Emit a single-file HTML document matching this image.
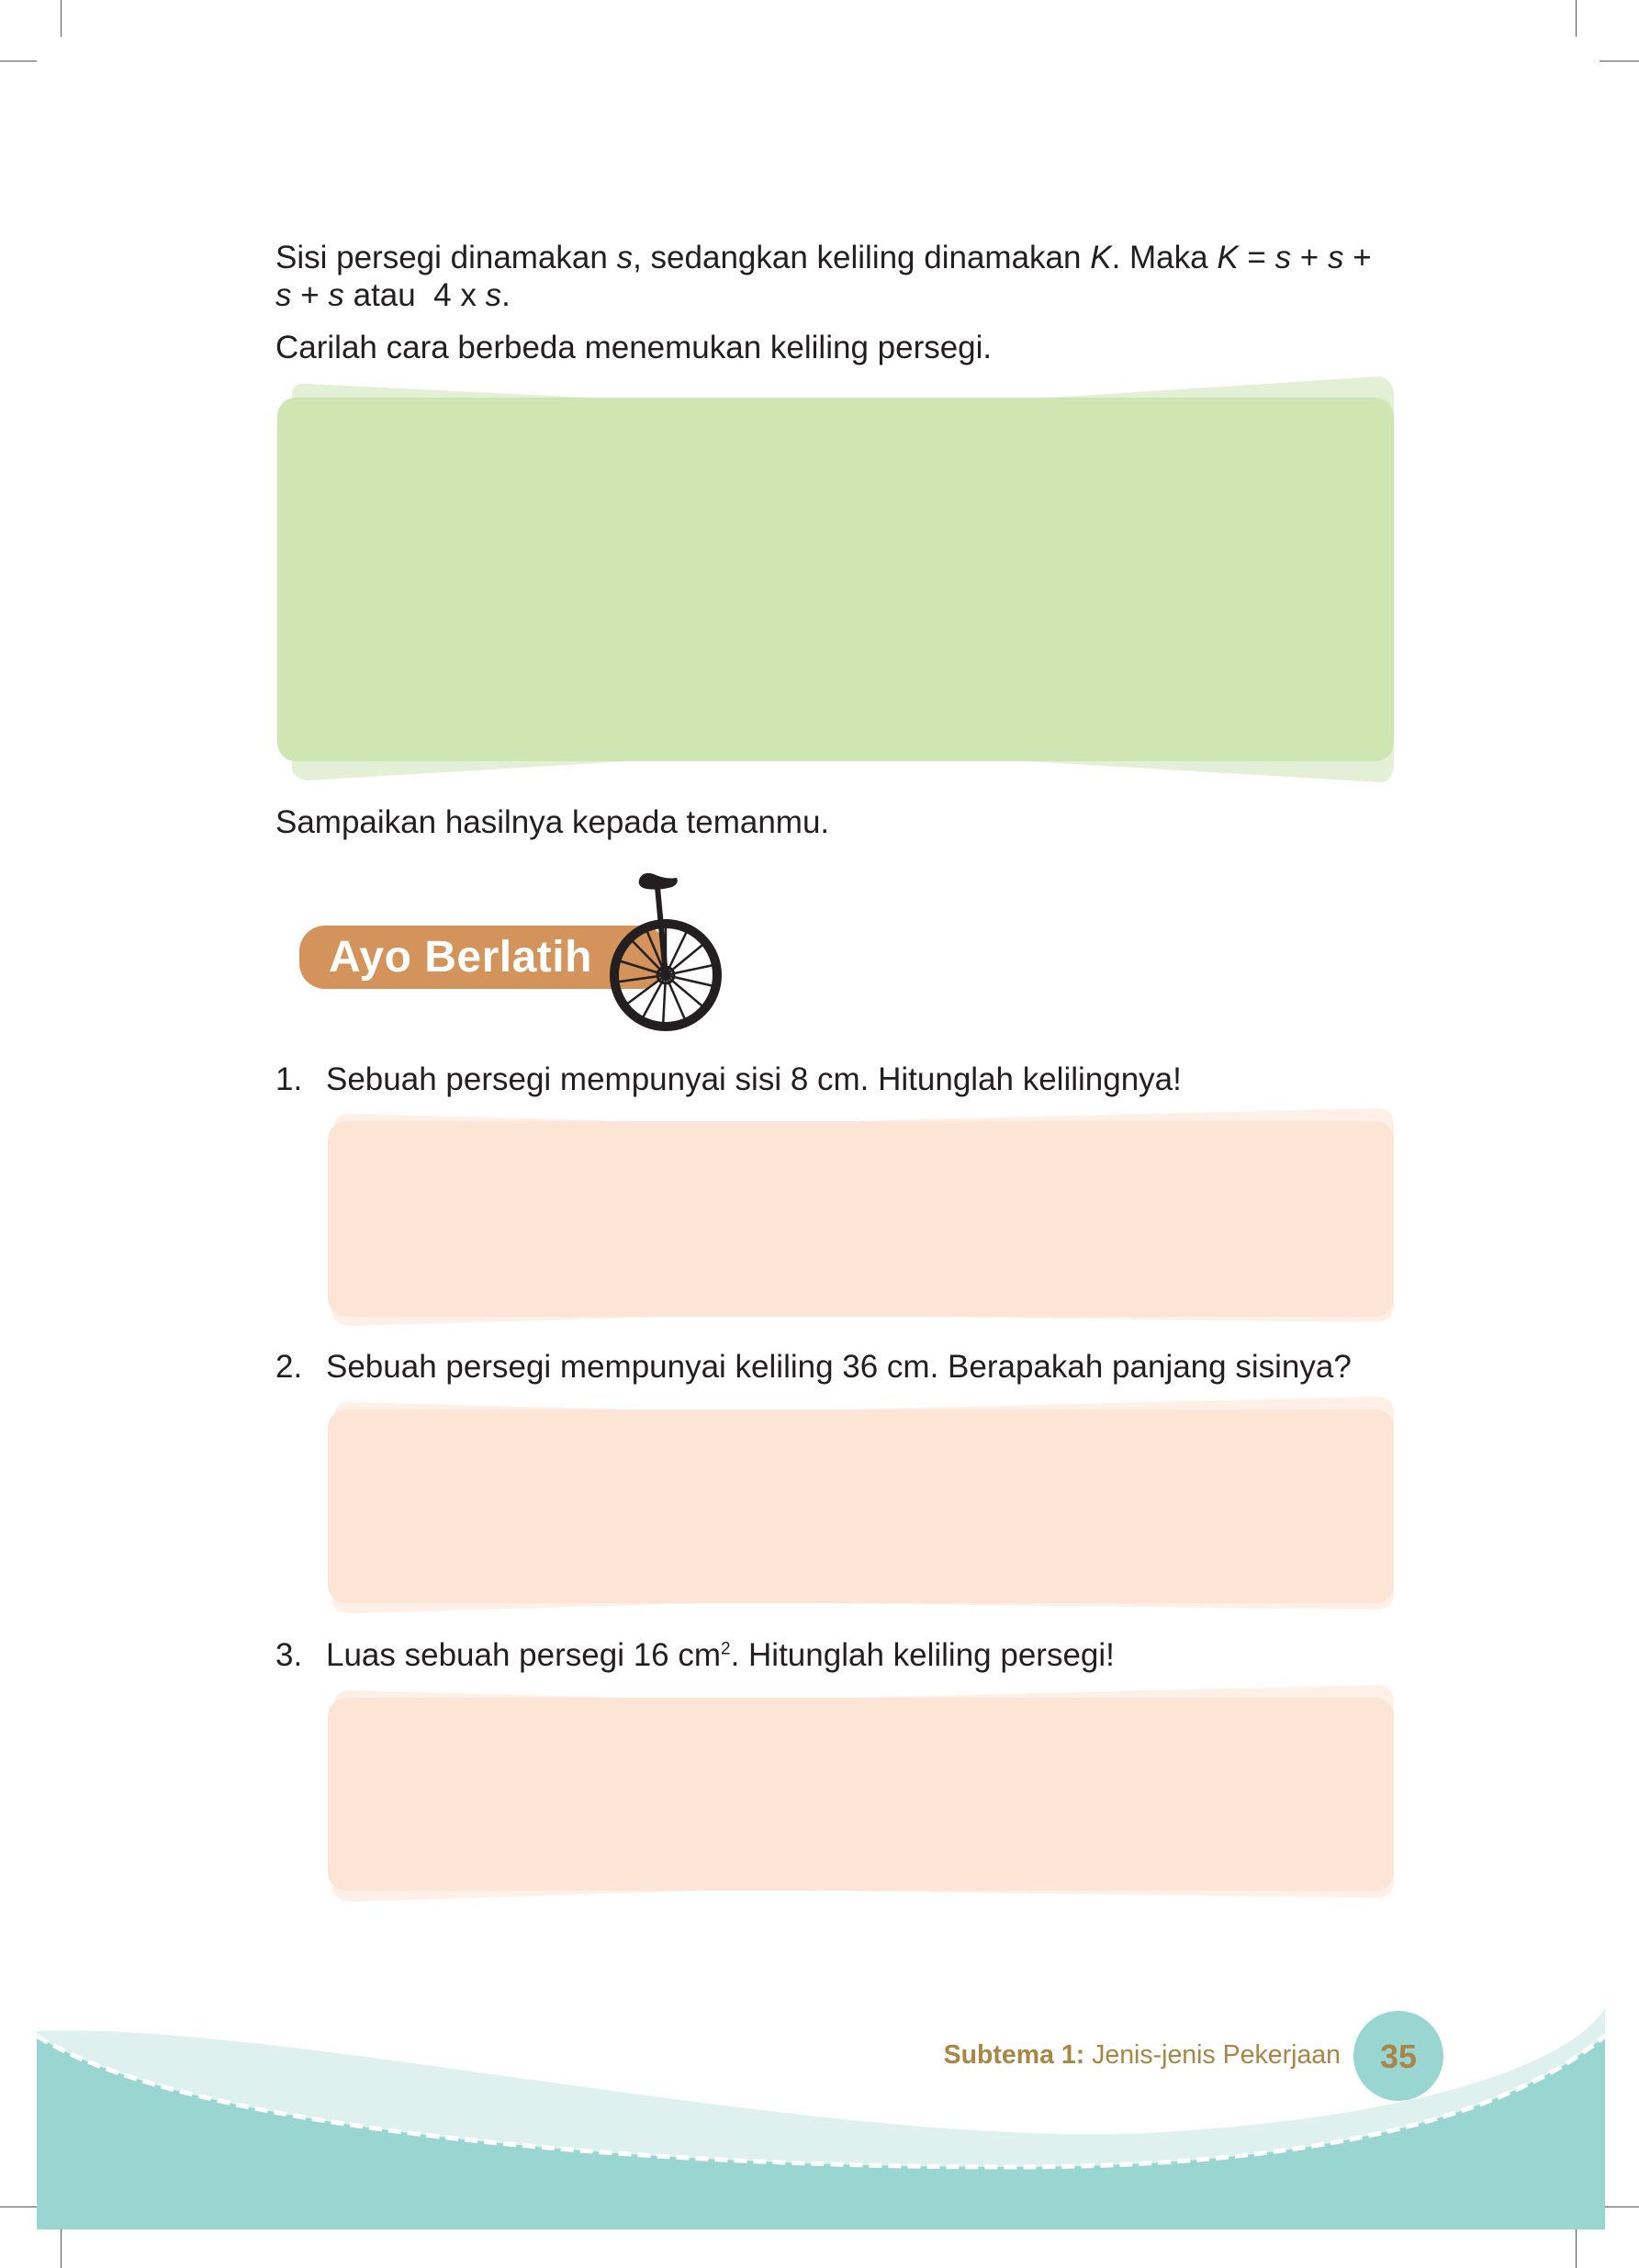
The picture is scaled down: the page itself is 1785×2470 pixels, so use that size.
<!DOCTYPE html>
<html><head><meta charset="utf-8"><style>
html,body{margin:0;padding:0;background:#fff}
body{width:1785px;height:2470px;position:relative;overflow:hidden;font-family:"Liberation Sans",sans-serif;color:#231f20}
.t{position:absolute;font-size:35px;white-space:nowrap;line-height:1}
.cm{position:absolute;background:#555}
</style></head><body>
<div class="cm" style="left:66px;top:0;width:1px;height:40px"></div>
<div class="cm" style="left:0;top:66px;width:40px;height:1px"></div>
<div class="cm" style="left:1716px;top:0;width:1px;height:40px"></div>
<div class="cm" style="left:1742px;top:66px;width:43px;height:1px"></div>
<div class="cm" style="left:0;top:2403px;width:40px;height:1px"></div>
<div class="cm" style="left:66px;top:2426px;width:1px;height:44px"></div>
<div class="cm" style="left:1745px;top:2403px;width:40px;height:1px"></div>
<div class="cm" style="left:1716px;top:2426px;width:1px;height:44px"></div>

<div class="t" style="left:300px;top:263px">Sisi persegi dinamakan <i>s</i>, sedangkan keliling dinamakan <i>K</i>. Maka <i>K</i> = <i>s</i> + <i>s</i> +</div>
<div class="t" style="left:300px;top:304px"><i>s</i> + <i>s</i> atau&nbsp; 4 x <i>s</i>.</div>
<div class="t" style="left:300px;top:361px">Carilah cara berbeda menemukan keliling persegi.</div>

<svg style="position:absolute;left:0;top:0" width="1785" height="2470">
<path d="M318 428 Q320 416 335 418 L700 436 L1100 436 L1500 410 Q1515 410 1518 428 L1518 830 Q1518 850 1505 852 L1100 828 L700 828 L335 850 Q318 848 318 835 Z" fill="#e3f0d5"/>
<rect x="302" y="433" width="1216" height="396" rx="20" fill="#cfe5b2"/>
<path d="M365 1222 Q368 1212 385 1213 L800 1224 L1500 1207 Q1518 1208 1518 1225 L1518 1425 Q1515 1440 1500 1440 L800 1432 L385 1444 Q365 1444 362 1432 Z" fill="#fef0e6"/>
<rect x="357" y="1221" width="1161" height="213" rx="20" fill="#fde5d5"/>
<path d="M365 1536 Q368 1526 385 1527 L800 1538 L1500 1521 Q1518 1522 1518 1539 L1518 1738 Q1515 1753 1500 1753 L800 1745 L385 1757 Q365 1757 362 1745 Z" fill="#fef0e6"/>
<rect x="357" y="1535" width="1161" height="211" rx="20" fill="#fde5d5"/>
<path d="M365 1850 Q368 1840 385 1841 L800 1852 L1500 1835 Q1518 1836 1518 1853 L1518 2052 Q1515 2067 1500 2067 L800 2058 L385 2071 Q365 2071 362 2059 Z" fill="#fef0e6"/>
<rect x="357" y="1849" width="1161" height="210" rx="20" fill="#fde5d5"/>

<rect x="326" y="1008" width="400" height="69" rx="28" fill="#d4935a"/>
<text x="358" y="1058" font-family="Liberation Sans,sans-serif" font-weight="bold" font-size="48" letter-spacing="0.5" fill="#fff">Ayo Berlatih</text>
<path d="M696 958 Q700 948 712 952 Q725 958 737 956 Q740 962 732 966 Q718 970 704 968 Q694 966 696 958Z" fill="#231f20"/>
<path d="M716 966 L725 1062" stroke="#231f20" stroke-width="6"/>
<g stroke="#231f20" stroke-width="2.5">
<line x1="725" y1="1062" x2="725" y2="1005"/><line x1="725" y1="1062" x2="750" y2="1010"/><line x1="725" y1="1062" x2="770" y2="1025"/><line x1="725" y1="1062" x2="782" y2="1050"/><line x1="725" y1="1062" x2="782" y2="1075"/><line x1="725" y1="1062" x2="770" y2="1100"/><line x1="725" y1="1062" x2="748" y2="1115"/><line x1="725" y1="1062" x2="722" y2="1118"/><line x1="725" y1="1062" x2="698" y2="1112"/><line x1="725" y1="1062" x2="678" y2="1097"/><line x1="725" y1="1062" x2="668" y2="1070"/><line x1="725" y1="1062" x2="670" y2="1045"/><line x1="725" y1="1062" x2="684" y2="1020"/><line x1="725" y1="1062" x2="702" y2="1008"/>
</g>
<circle cx="725" cy="1062" r="9" fill="none" stroke="#231f20" stroke-width="3"/>
<circle cx="725" cy="1062" r="56" fill="none" stroke="#231f20" stroke-width="10"/>

<path d="M40 2212 C300 2200 900 2340 1250 2323 C1500 2310 1700 2260 1748 2187 L1748 2428 L40 2428 Z" fill="#dff1ef"/>
<path d="M40 2217 C200 2320 700 2360 1100 2360 C1450 2360 1650 2300 1748 2217 L1748 2428 L40 2428 Z" fill="#99d6d2"/>
<path d="M40 2217 C200 2320 700 2360 1100 2360 C1450 2360 1650 2300 1748 2217" fill="none" stroke="#fff" stroke-width="5" stroke-dasharray="14 7"/>
<circle cx="1523" cy="2239" r="49" fill="#99d6d2"/>
<text x="1523" y="2252" text-anchor="middle" font-family="Liberation Sans,sans-serif" font-weight="bold" font-size="36" fill="#a98645">35</text>
<text x="1460" y="2247" text-anchor="end" font-family="Liberation Sans,sans-serif" font-size="28.5" fill="#a98645"><tspan font-weight="bold">Subtema 1:</tspan> Jenis-jenis Pekerjaan</text>
</svg>

<div class="t" style="left:300px;top:878px">Sampaikan hasilnya kepada temanmu.</div>
<div class="t" style="left:300px;top:1158px">1.</div>
<div class="t" style="left:355px;top:1158px">Sebuah persegi mempunyai sisi 8 cm. Hitunglah kelilingnya!</div>
<div class="t" style="left:300px;top:1471px">2.</div>
<div class="t" style="left:355px;top:1471px">Sebuah persegi mempunyai keliling 36 cm. Berapakah panjang sisinya?</div>
<div class="t" style="left:300px;top:1785px">3.</div>
<div class="t" style="left:355px;top:1785px">Luas sebuah persegi 16 cm<sup style="font-size:19px">2</sup>. Hitunglah keliling persegi!</div>
</body></html>
